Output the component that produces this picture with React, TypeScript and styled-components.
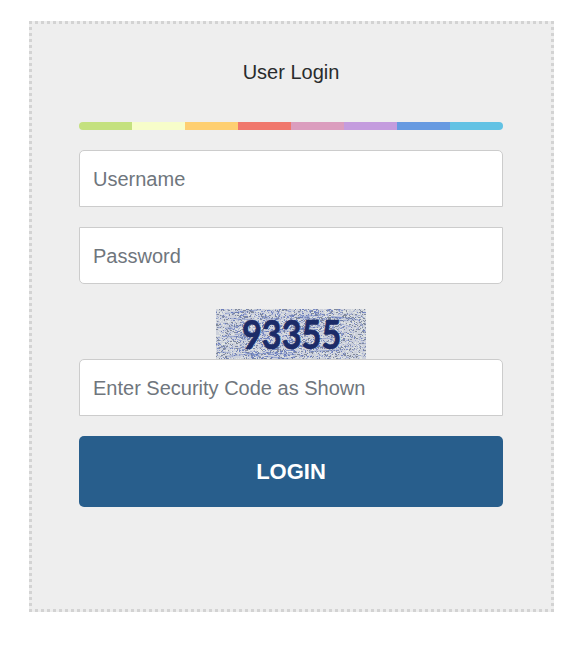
import React from "react";
import styled, { createGlobalStyle } from "styled-components";

const GlobalStyle = createGlobalStyle`
  * { box-sizing: border-box; }
  body {
    margin: 0;
    background: #fff;
    font-family: "Liberation Sans", Arial, sans-serif;
  }
`;

const Page = styled.main`
  padding: 21px 18px 40px 29px;
`;

const Panel = styled.form`
  display: flex;
  flex-direction: column;
  width: 525px;
  height: 591px;
  padding: 35px 48px 0 47px;
  border: 3px dotted #d3d3d3;
  background: #eee;
`;

const Title = styled.h1`
  margin: 0;
  height: 26px;
  font-size: 20px;
  line-height: 26px;
  font-weight: 400;
  text-align: center;
  color: #292b2c;
`;

const Stripe = styled.div`
  display: flex;
  height: 8px;
  margin: 37px 0 20px;
  border-radius: 5px;
  overflow: hidden;
`;

const Band = styled.span<{ $color: string }>`
  flex: 1;
  background: ${(p) => p.$color};
`;

const Field = styled.input<{ $radius: string; $gap?: number }>`
  display: block;
  width: 100%;
  height: 57px;
  flex: none;
  margin: 0 0 ${(p) => p.$gap ?? 20}px;
  padding: 2px 13px 0;
  border: 1px solid #ccc;
  border-radius: ${(p) => p.$radius};
  background: #fff;
  color: #464a4c;
  font-family: inherit;
  font-size: 20px;
  outline: none;
  &::placeholder {
    color: #6f767d;
    opacity: 1;
  }
`;

const Captcha = styled.svg`
  display: block;
  flex: none;
  align-self: center;
  width: 150px;
  height: 50px;
`;

const NoiseLayer = styled.g`
  filter: blur(0.4px);
`;

const Submit = styled.button`
  flex: none;
  height: 71px;
  padding: 0;
  border: 0;
  border-radius: 5px;
  background: #285e8c;
  color: #fff;
  font-family: inherit;
  font-size: 22px;
  font-weight: 700;
  line-height: 71px;
`;

const bands = [
  "#c4e17f",
  "#f7fdca",
  "#fecf71",
  "#f0776c",
  "#db9dbe",
  "#c49cde",
  "#669ae1",
  "#62c2e4",
];

const noiseColors = ["#7d8dc6", "#8d9ccb", "#6f80bb", "#a3add0", "#818a9c", "#e0e4e2"];

function buildNoise() {
  let seed = 93355;
  const next = () => {
    seed = (seed + 0x6d2b79f5) | 0;
    let t = Math.imul(seed ^ (seed >>> 15), 1 | seed);
    t = (t + Math.imul(t ^ (t >>> 7), 61 | t)) ^ t;
    return ((t ^ (t >>> 14)) >>> 0) / 4294967296;
  };
  const paths = noiseColors.map(() => "");
  for (let i = 0; i < 4000; i++) {
    const x = Math.floor(next() * 150);
    const y = Math.floor(next() * 50);
    const w = next() > 0.7 ? 2 : 1;
    // The blue tint fades out gradually towards both ends.
    const blue = next() < 1.15 - Math.abs(x - 65) / 80;
    const c = blue
      ? Math.floor(next() * noiseColors.length)
      : 3 + Math.floor(next() * 3);
    paths[c] += `M${x} ${y}h${w}v1h-${w}z`;
  }
  let streaks = "";
  for (let i = 0; i < 30; i++) {
    const x = Math.floor(next() * 120);
    const y = Math.floor(next() * 50) + 0.5;
    streaks += `M${x} ${y}l${12 + Math.floor(next() * 26)} ${(next() * 10 - 5).toFixed(1)}`;
  }
  return { paths, streaks };
}

const noise = buildNoise();

function SecurityImage() {
  return (
    <Captcha viewBox="0 0 150 50" role="img" aria-label="Security code">
      <rect width="150" height="50" fill="#cdd1dc" />
      <NoiseLayer>
        {noise.paths.map((d, i) => (
          <path key={noiseColors[i]} d={d} fill={noiseColors[i]} />
        ))}
        <path d={noise.streaks} stroke="#5870bd" strokeWidth="0.9" strokeOpacity="0.5" fill="none" />
      </NoiseLayer>
      <text
        fontFamily="Lato, sans-serif"
        fontSize="41"
        fontWeight="700"
        fill="#1b2b68"
        stroke="#1b2b68"
        strokeWidth="0.7"
        transform="translate(26 40) scale(0.835 1)"
      >
        93355
      </text>
    </Captcha>
  );
}

export default function App() {
  return (
    <>
      <GlobalStyle />
      <Page>
        <Panel onSubmit={(e: React.FormEvent) => e.preventDefault()}>
          <Title>User Login</Title>
          <Stripe>
            {bands.map((color) => (
              <Band key={color} $color={color} />
            ))}
          </Stripe>
          <Field placeholder="Username" $radius="5px 5px 0 0" />
          <Field type="password" placeholder="Password" $radius="0 0 5px 5px" $gap={25} />
          <SecurityImage />
          <Field placeholder="Enter Security Code as Shown" $radius="5px 5px 0 0" />
          <Submit type="submit">LOGIN</Submit>
        </Panel>
      </Page>
    </>
  );
}
